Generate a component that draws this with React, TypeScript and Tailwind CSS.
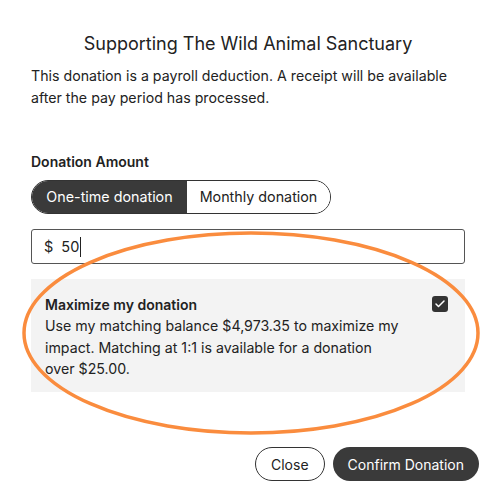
import { Check } from 'lucide-react'

export default function App() {
  return (
    <div
      className="relative w-[500px] h-[500px] bg-white text-[#222]"
      style={{ fontFamily: 'Inter, "Liberation Sans", sans-serif' }}
    >
      <div className="flex flex-col pl-[31px] pr-[35px] pt-[32px]">
        <h1 className="text-center text-[18px] leading-[24px] font-normal">
          Supporting The Wild Animal Sanctuary
        </h1>
        <p className="mt-[9px] text-[14.2px] leading-[22px] whitespace-nowrap">
          This donation is a payroll deduction. A receipt will be available
          <br />
          after the pay period has processed.
        </p>

        <div className="mt-[43px] text-[14px] leading-[20px] font-semibold">Donation Amount</div>

        <div className="mt-[8px] flex w-[300px] h-[34px] rounded-full border border-[#333] overflow-hidden text-[14.3px]">
          <div className="flex items-center justify-center w-[155px] bg-[#3a3a3a] text-white">One-time donation</div>
          <div className="flex flex-1 items-center justify-center bg-white">Monthly donation</div>
        </div>

        <div className="mt-[15px] flex items-center h-[35px] rounded-[3px] border border-[#555] px-[12px] text-[14.5px]">
          <span>$</span>
          <span className="ml-[8px]">50</span>
          <span className="ml-[1px] w-px h-[20px] bg-[#222]" />
        </div>

        <div className="mt-[15px] flex bg-[#f3f3f3] pl-[14px] pr-[17px] pt-[16px] pb-[14px] h-[113px]">
          <div className="flex-1">
            <div className="text-[14px] leading-[20px] font-semibold">Maximize my donation</div>
            <p className="text-[14.2px] leading-[21.5px] whitespace-nowrap">
              Use my matching balance $4,973.35 to maximize my
              <br />
              impact. Matching at 1:1 is available for a donation
              <br />
              over $25.00.
            </p>
          </div>
          <div className="mt-[1px] flex items-center justify-center w-[16px] h-[16px] rounded-[3px] bg-[#333]">
            <Check className="w-[12px] h-[12px] text-white" strokeWidth={3} />
          </div>
        </div>

        <div className="mt-[55px] -mr-[14px] flex justify-end gap-[8px] text-[14px]">
          <button className="h-[34px] px-[15px] rounded-full border border-[#333] bg-white">Close</button>
          <button className="h-[34px] px-[15px] rounded-full bg-[#3a3a3a] text-white">Confirm Donation</button>
        </div>
      </div>

      {/* orange annotation ring */}
      <svg className="absolute left-0 top-0 pointer-events-none" width="500" height="500">
        <ellipse cx="251" cy="333" rx="227" ry="100" fill="none" stroke="#fa8c3e" strokeWidth="3.5" />
      </svg>
    </div>
  )
}
